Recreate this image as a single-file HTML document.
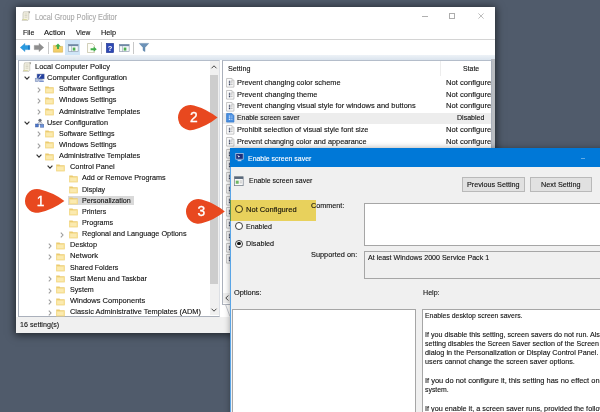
<!DOCTYPE html>
<html lang="en"><head><meta charset="utf-8"><title>Local Group Policy Editor</title>
<style>
html,body{margin:0;padding:0}
html{width:600px;height:412px;overflow:hidden}
body{width:600px;height:412px;overflow:hidden;background:#505b6b;position:relative;font-family:"Liberation Sans",sans-serif}
.abs,.ic,.tx,#win,#dlg{position:absolute}
.ic{display:block;overflow:visible}
.tx{white-space:nowrap;transform-origin:0 50%;-webkit-text-stroke:0.12px currentColor}
#win{background:#fff;box-shadow:0 1px 8px 1px rgba(0,0,0,.6);}
.pane{background:#fff;border:1px solid #aab0bb;border-top-color:#b4bdca;box-sizing:border-box}
#dlg{background:#f0f0f0;border:1px solid #5aa5e6;box-sizing:border-box;box-shadow:0 0 6px rgba(0,0,0,.35)}
.btn{background:#e1e1e1;border:0.7px solid #b9b9b9;box-sizing:border-box}
.box{border:0.7px solid #a6a6a6;box-sizing:border-box}
#clip{position:absolute;left:0;top:0;width:600px;height:412px;overflow:hidden;contain:strict}
#stage{position:absolute;left:-20px;top:-20px;width:640px;height:452px;background:#505b6b;filter:blur(0.4px)}
#org{position:absolute;left:20px;top:20px;width:0;height:0}
</style></head><body><div id="clip"><div id="stage"><div id="org">
<div id="win" style="left:16px;top:7px;width:479px;height:326px">
</div>
<svg class="ic" style="left:21px;top:11px" width="10" height="10" viewBox="0 0 10 10"><path d="M2.6 0.8h6.2l-1 1.9v5.6l-0.8 1h-6l1-1.3v-5.3z" fill="#f3f1e2" stroke="#b3b1a2" stroke-width="0.6"/><path d="M3.6 3h2.8M3.6 4.6h2.8M3.6 6.2h2.8" stroke="#c2c0ae" stroke-width="0.6"/><path d="M7.4 0.6h1.6l-0.9 1.9z" fill="#8b8b86"/><path d="M1.2 9.1l0.9-1.2h4l-0.6 1.2z" fill="#d9d8a0"/></svg>
<span class="tx" style="left:34.5px;top:11.56px;font-size:8.4px;line-height:10.08px;color:#a9a9a9;transform:scaleX(0.868)">Local Group Policy Editor</span>
<div class="abs" style="left:422px;top:15.8px;width:6px;height:0.8px;background:#b0b0b0"></div>
<div class="abs" style="left:449.4px;top:13px;width:6px;height:6px;border:0.8px solid #adadad;box-sizing:border-box"></div>
<svg class="ic" style="left:478px;top:13px" width="6" height="6" viewBox="0 0 6 6"><path d="M0.4 0.4L5.6 5.6M5.6 0.4L0.4 5.6" stroke="#adadad" stroke-width="0.8"/></svg>
<span class="tx" style="left:22.5px;top:27.60px;font-size:8.0px;line-height:9.6px;color:#111;transform:scaleX(0.877)">File</span>
<span class="tx" style="left:43.8px;top:27.60px;font-size:8.0px;line-height:9.6px;color:#111;transform:scaleX(0.958)">Action</span>
<span class="tx" style="left:75.8px;top:27.60px;font-size:8.0px;line-height:9.6px;color:#111;transform:scaleX(0.831)">View</span>
<span class="tx" style="left:101.3px;top:27.60px;font-size:8.0px;line-height:9.6px;color:#111;transform:scaleX(0.912)">Help</span>
<div class="abs" style="left:16px;top:39px;width:479px;height:1px;background:#d4d4d4"></div>
<div class="abs" style="left:16px;top:55px;width:479px;height:5px;background:linear-gradient(#edf2f7,#dbe4ee)"></div>
<svg class="ic" style="left:19.5px;top:43.2px" width="10" height="9" viewBox="0 0 10 9"><path d="M0.3 4.5L4.9 0.4v2h4.8v4.2H4.9v2z" fill="#2a9be0" stroke="#1f86cf" stroke-width="0.4"/><path d="M8 2.4h1.7v4.2H8z" fill="#1a78c2"/></svg>
<svg class="ic" style="left:33.8px;top:43.2px" width="10" height="9" viewBox="0 0 10 9"><path d="M9.7 4.5L5.1 0.4v2H0.3v4.2h4.8v2z" fill="#8e8e8e" stroke="#808080" stroke-width="0.4"/></svg>
<div class="abs" style="left:48px;top:41.7px;width:1px;height:12px;background:#c8c8c8"></div>
<svg class="ic" style="left:52.5px;top:42.7px" width="10" height="10" viewBox="0 0 10 10"><path d="M0.4 2.4h3.4l0.9 1h4.9v5.8h-9.2z" fill="#f2cf6a" stroke="#d2a840" stroke-width="0.5"/><path d="M5 0.6L7.8 3.4H6v2.6H4V3.4H2.2z" fill="#3fae49"/></svg>
<div class="abs" style="left:65px;top:40px;width:15.3px;height:15.3px;background:#cfe5f7"></div>
<svg class="ic" style="left:67.5px;top:43.900000000000006px" width="10.5" height="8" viewBox="0 0 12 9" preserveAspectRatio="none"><rect x="0.4" y="0.4" width="11.2" height="8.2" fill="#f4f7fa" stroke="#8796a8" stroke-width="0.7"/><rect x="0.4" y="0.4" width="11.2" height="2" fill="#6f88a6"/><path d="M4 2.4v6.2" stroke="#8796a8" stroke-width="0.6"/><rect x="5.4" y="4" width="3" height="3.4" fill="#4cae50"/></svg>
<svg class="ic" style="left:86.5px;top:42.7px" width="10" height="10" viewBox="0 0 10 10"><path d="M0.5 0.5h5l2 2v7h-7z" fill="#fdfdf6" stroke="#b3b08f" stroke-width="0.6"/><path d="M3.6 5.2h3V3.6L9.8 6.2L6.6 8.8V7.2h-3z" fill="#3fae49"/></svg>
<div class="abs" style="left:101.3px;top:41.7px;width:1px;height:12px;background:#c8c8c8"></div>
<svg class="ic" style="left:106.2px;top:42.5px" width="8" height="10" viewBox="0 0 8 10"><rect x="0.3" y="0.3" width="7.4" height="9.4" fill="#2d48b4" stroke="#1d3088" stroke-width="0.5"/><text x="4" y="7.6" text-anchor="middle" font-family="Liberation Sans, sans-serif" font-weight="bold" font-size="7.5" fill="#fff">?</text></svg>
<svg class="ic" style="left:119px;top:43.900000000000006px" width="10.5" height="8" viewBox="0 0 12 9" preserveAspectRatio="none"><rect x="0.4" y="0.4" width="11.2" height="8.2" fill="#f4f7fa" stroke="#8796a8" stroke-width="0.7"/><rect x="0.4" y="0.4" width="11.2" height="2" fill="#6f88a6"/><path d="M4 2.4v6.2" stroke="#8796a8" stroke-width="0.6"/><rect x="5.4" y="4" width="3" height="3.4" fill="#4cae50"/></svg>
<div class="abs" style="left:133.3px;top:41.7px;width:1px;height:12px;background:#c8c8c8"></div>
<svg class="ic" style="left:139.3px;top:43.2px" width="10" height="9" viewBox="0 0 10 9"><path d="M0.3 0.4h9.4L6 4.4v4.2L4 7.4v-3z" fill="#6c92b8" stroke="#52799f" stroke-width="0.4"/></svg>
<div class="abs pane" style="left:18px;top:60px;width:202px;height:257px;border-right-color:#dcdfe4"></div>
<div class="abs" style="left:210px;top:61px;width:9px;height:254px;background:#f0f0f0"></div>
<div class="abs" style="left:210px;top:75px;width:8.2px;height:209px;background:#cdcdcd"></div>
<svg class="ic" style="left:210.5px;top:65px" width="6" height="4" viewBox="0 0 6 4"><path d="M0.5 3.3L3 0.8L5.5 3.3" fill="none" stroke="#444" stroke-width="1"/></svg>
<svg class="ic" style="left:210.5px;top:308px" width="6" height="4" viewBox="0 0 6 4"><path d="M0.5 0.7L3 3.2L5.5 0.7" fill="none" stroke="#444" stroke-width="1"/></svg>
<svg class="ic" style="left:22.3px;top:61.900000000000006px" width="10" height="10" viewBox="0 0 10 10"><path d="M2.6 0.8h6.2l-1 1.9v5.6l-0.8 1h-6l1-1.3v-5.3z" fill="#f3f1e2" stroke="#b3b1a2" stroke-width="0.6"/><path d="M3.6 3h2.8M3.6 4.6h2.8M3.6 6.2h2.8" stroke="#c2c0ae" stroke-width="0.6"/><path d="M7.4 0.6h1.6l-0.9 1.9z" fill="#8b8b86"/><path d="M1.2 9.1l0.9-1.2h4l-0.6 1.2z" fill="#d9d8a0"/></svg>
<span class="tx" style="left:34.5px;top:61.90px;font-size:8.0px;line-height:9.6px;color:#111;transform:scaleX(0.937)">Local Computer Policy</span>
<svg class="ic" style="left:34.0px;top:73.05000000000001px" width="11" height="10" viewBox="0 0 11 10"><rect x="3" y="1" width="7.2" height="5" fill="#23409f" stroke="#8a96b4" stroke-width="0.5"/><path d="M4.3 4.8l2.2-3 1.2 0-2.2 3z" fill="#fff" opacity=".9"/><rect x="5" y="6.3" width="3.6" height="1" fill="#8da0c4"/><rect x="1.2" y="5.2" width="3.2" height="3.4" fill="#b7c4de" stroke="#6f83b3" stroke-width="0.5"/><rect x="5.2" y="7.6" width="4.6" height="1.2" fill="#5b78c0"/></svg>
<svg class="ic" style="left:24.0px;top:76.05000000000001px" width="6" height="4" viewBox="0 0 6 4"><path d="M0.6 0.7L3 3.1L5.4 0.7" fill="none" stroke="#333" stroke-width="1.2"/></svg>
<span class="tx" style="left:47.0px;top:73.05px;font-size:8.0px;line-height:9.6px;color:#111;transform:scaleX(0.942)">Computer Configuration</span>
<svg class="ic" style="left:45.05px;top:85.7px" width="9" height="7.5" viewBox="0 0 9 7.5"><path d="M0.2 0.4h3.3l0.7 0.9h4.5v5.9h-8.5z" fill="#ebcb70"/><path d="M0.2 2h8.5v5.2h-8.5z" fill="#f6df94"/><path d="M1.2 3h6.3v3h-6.3z" fill="#fbeab0"/></svg>
<svg class="ic" style="left:36.95px;top:86.8px" width="4" height="6" viewBox="0 0 4 6"><path d="M0.8 0.6L3 3L0.8 5.4" fill="none" stroke="#9c9c9c" stroke-width="1.1"/></svg>
<span class="tx" style="left:58.8px;top:84.20px;font-size:8.0px;line-height:9.6px;color:#111;transform:scaleX(0.885)">Software Settings</span>
<svg class="ic" style="left:45.05px;top:96.85000000000001px" width="9" height="7.5" viewBox="0 0 9 7.5"><path d="M0.2 0.4h3.3l0.7 0.9h4.5v5.9h-8.5z" fill="#ebcb70"/><path d="M0.2 2h8.5v5.2h-8.5z" fill="#f6df94"/><path d="M1.2 3h6.3v3h-6.3z" fill="#fbeab0"/></svg>
<svg class="ic" style="left:36.95px;top:97.95px" width="4" height="6" viewBox="0 0 4 6"><path d="M0.8 0.6L3 3L0.8 5.4" fill="none" stroke="#9c9c9c" stroke-width="1.1"/></svg>
<span class="tx" style="left:58.8px;top:95.35px;font-size:8.0px;line-height:9.6px;color:#111;transform:scaleX(0.904)">Windows Settings</span>
<svg class="ic" style="left:45.05px;top:108.0px" width="9" height="7.5" viewBox="0 0 9 7.5"><path d="M0.2 0.4h3.3l0.7 0.9h4.5v5.9h-8.5z" fill="#ebcb70"/><path d="M0.2 2h8.5v5.2h-8.5z" fill="#f6df94"/><path d="M1.2 3h6.3v3h-6.3z" fill="#fbeab0"/></svg>
<svg class="ic" style="left:36.95px;top:109.1px" width="4" height="6" viewBox="0 0 4 6"><path d="M0.8 0.6L3 3L0.8 5.4" fill="none" stroke="#9c9c9c" stroke-width="1.1"/></svg>
<span class="tx" style="left:58.8px;top:106.50px;font-size:8.0px;line-height:9.6px;color:#111;transform:scaleX(0.915)">Administrative Templates</span>
<svg class="ic" style="left:34.0px;top:117.65px" width="11" height="10" viewBox="0 0 11 10"><circle cx="6" cy="2.3" r="1.6" fill="#6b6f78"/><path d="M3.6 6.6c0-1.8 1-2.7 2.4-2.7s2.4 0.9 2.4 2.7z" fill="#d9dde6" stroke="#7b8294" stroke-width="0.5"/><rect x="1.4" y="6" width="3" height="3" fill="#4d76c8" stroke="#35569c" stroke-width="0.4"/><rect x="6.4" y="6.6" width="3.4" height="2.6" fill="#6c93dc" stroke="#35569c" stroke-width="0.4"/></svg>
<svg class="ic" style="left:24.0px;top:120.65px" width="6" height="4" viewBox="0 0 6 4"><path d="M0.6 0.7L3 3.1L5.4 0.7" fill="none" stroke="#333" stroke-width="1.2"/></svg>
<span class="tx" style="left:47.0px;top:117.65px;font-size:8.0px;line-height:9.6px;color:#111;transform:scaleX(0.914)">User Configuration</span>
<svg class="ic" style="left:45.05px;top:130.3px" width="9" height="7.5" viewBox="0 0 9 7.5"><path d="M0.2 0.4h3.3l0.7 0.9h4.5v5.9h-8.5z" fill="#ebcb70"/><path d="M0.2 2h8.5v5.2h-8.5z" fill="#f6df94"/><path d="M1.2 3h6.3v3h-6.3z" fill="#fbeab0"/></svg>
<svg class="ic" style="left:36.95px;top:131.4px" width="4" height="6" viewBox="0 0 4 6"><path d="M0.8 0.6L3 3L0.8 5.4" fill="none" stroke="#9c9c9c" stroke-width="1.1"/></svg>
<span class="tx" style="left:58.8px;top:128.80px;font-size:8.0px;line-height:9.6px;color:#111;transform:scaleX(0.885)">Software Settings</span>
<svg class="ic" style="left:45.05px;top:141.45px" width="9" height="7.5" viewBox="0 0 9 7.5"><path d="M0.2 0.4h3.3l0.7 0.9h4.5v5.9h-8.5z" fill="#ebcb70"/><path d="M0.2 2h8.5v5.2h-8.5z" fill="#f6df94"/><path d="M1.2 3h6.3v3h-6.3z" fill="#fbeab0"/></svg>
<svg class="ic" style="left:36.95px;top:142.54999999999998px" width="4" height="6" viewBox="0 0 4 6"><path d="M0.8 0.6L3 3L0.8 5.4" fill="none" stroke="#9c9c9c" stroke-width="1.1"/></svg>
<span class="tx" style="left:58.8px;top:139.95px;font-size:8.0px;line-height:9.6px;color:#111;transform:scaleX(0.904)">Windows Settings</span>
<svg class="ic" style="left:45.05px;top:152.60000000000002px" width="9" height="7.5" viewBox="0 0 9 7.5"><path d="M0.2 0.4h3.3l0.7 0.9h4.5v5.9h-8.5z" fill="#ebcb70"/><path d="M0.2 2h8.5v5.2h-8.5z" fill="#f6df94"/><path d="M1.2 3h6.3v3h-6.3z" fill="#fbeab0"/></svg>
<svg class="ic" style="left:35.75px;top:154.10000000000002px" width="6" height="4" viewBox="0 0 6 4"><path d="M0.6 0.7L3 3.1L5.4 0.7" fill="none" stroke="#333" stroke-width="1.2"/></svg>
<span class="tx" style="left:58.8px;top:151.10px;font-size:8.0px;line-height:9.6px;color:#111;transform:scaleX(0.915)">Administrative Templates</span>
<svg class="ic" style="left:56.39999999999999px;top:163.75px" width="9" height="7.5" viewBox="0 0 9 7.5"><path d="M0.2 0.4h3.3l0.7 0.9h4.5v5.9h-8.5z" fill="#ebcb70"/><path d="M0.2 2h8.5v5.2h-8.5z" fill="#f6df94"/><path d="M1.2 3h6.3v3h-6.3z" fill="#fbeab0"/></svg>
<svg class="ic" style="left:47.099999999999994px;top:165.25px" width="6" height="4" viewBox="0 0 6 4"><path d="M0.6 0.7L3 3.1L5.4 0.7" fill="none" stroke="#333" stroke-width="1.2"/></svg>
<span class="tx" style="left:70.1px;top:162.25px;font-size:8.0px;line-height:9.6px;color:#111;transform:scaleX(0.922)">Control Panel</span>
<svg class="ic" style="left:68.5px;top:174.9px" width="9" height="7.5" viewBox="0 0 9 7.5"><path d="M0.2 0.4h3.3l0.7 0.9h4.5v5.9h-8.5z" fill="#ebcb70"/><path d="M0.2 2h8.5v5.2h-8.5z" fill="#f6df94"/><path d="M1.2 3h6.3v3h-6.3z" fill="#fbeab0"/></svg>
<span class="tx" style="left:82.2px;top:173.40px;font-size:8.0px;line-height:9.6px;color:#111;transform:scaleX(0.904)">Add or Remove Programs</span>
<svg class="ic" style="left:68.5px;top:186.05px" width="9" height="7.5" viewBox="0 0 9 7.5"><path d="M0.2 0.4h3.3l0.7 0.9h4.5v5.9h-8.5z" fill="#ebcb70"/><path d="M0.2 2h8.5v5.2h-8.5z" fill="#f6df94"/><path d="M1.2 3h6.3v3h-6.3z" fill="#fbeab0"/></svg>
<span class="tx" style="left:82.2px;top:184.55px;font-size:8.0px;line-height:9.6px;color:#111;transform:scaleX(0.881)">Display</span>
<div class="abs" style="left:68px;top:195.80px;width:65.5px;height:9.6px;background:#d9d9d9"></div>
<svg class="ic" style="left:68.5px;top:197.20000000000002px" width="9" height="7.5" viewBox="0 0 9 7.5"><path d="M0.2 0.4h3.3l0.7 0.9h4.5v5.9h-8.5z" fill="#ebcb70"/><path d="M0.2 2h8.5v5.2h-8.5z" fill="#f6df94"/><path d="M1.2 3h6.3v3h-6.3z" fill="#fbeab0"/></svg>
<span class="tx" style="left:82.2px;top:195.70px;font-size:8.0px;line-height:9.6px;color:#111;transform:scaleX(0.890)">Personalization</span>
<svg class="ic" style="left:68.5px;top:208.35000000000002px" width="9" height="7.5" viewBox="0 0 9 7.5"><path d="M0.2 0.4h3.3l0.7 0.9h4.5v5.9h-8.5z" fill="#ebcb70"/><path d="M0.2 2h8.5v5.2h-8.5z" fill="#f6df94"/><path d="M1.2 3h6.3v3h-6.3z" fill="#fbeab0"/></svg>
<span class="tx" style="left:82.2px;top:206.85px;font-size:8.0px;line-height:9.6px;color:#111;transform:scaleX(0.878)">Printers</span>
<svg class="ic" style="left:68.5px;top:219.5px" width="9" height="7.5" viewBox="0 0 9 7.5"><path d="M0.2 0.4h3.3l0.7 0.9h4.5v5.9h-8.5z" fill="#ebcb70"/><path d="M0.2 2h8.5v5.2h-8.5z" fill="#f6df94"/><path d="M1.2 3h6.3v3h-6.3z" fill="#fbeab0"/></svg>
<span class="tx" style="left:82.2px;top:218.00px;font-size:8.0px;line-height:9.6px;color:#111;transform:scaleX(0.899)">Programs</span>
<svg class="ic" style="left:68.5px;top:230.65px" width="9" height="7.5" viewBox="0 0 9 7.5"><path d="M0.2 0.4h3.3l0.7 0.9h4.5v5.9h-8.5z" fill="#ebcb70"/><path d="M0.2 2h8.5v5.2h-8.5z" fill="#f6df94"/><path d="M1.2 3h6.3v3h-6.3z" fill="#fbeab0"/></svg>
<svg class="ic" style="left:60.400000000000006px;top:231.75px" width="4" height="6" viewBox="0 0 4 6"><path d="M0.8 0.6L3 3L0.8 5.4" fill="none" stroke="#9c9c9c" stroke-width="1.1"/></svg>
<span class="tx" style="left:82.2px;top:229.15px;font-size:8.0px;line-height:9.6px;color:#111;transform:scaleX(0.911)">Regional and Language Options</span>
<svg class="ic" style="left:56.39999999999999px;top:241.8px" width="9" height="7.5" viewBox="0 0 9 7.5"><path d="M0.2 0.4h3.3l0.7 0.9h4.5v5.9h-8.5z" fill="#ebcb70"/><path d="M0.2 2h8.5v5.2h-8.5z" fill="#f6df94"/><path d="M1.2 3h6.3v3h-6.3z" fill="#fbeab0"/></svg>
<svg class="ic" style="left:48.3px;top:242.9px" width="4" height="6" viewBox="0 0 4 6"><path d="M0.8 0.6L3 3L0.8 5.4" fill="none" stroke="#9c9c9c" stroke-width="1.1"/></svg>
<span class="tx" style="left:70.1px;top:240.30px;font-size:8.0px;line-height:9.6px;color:#111;transform:scaleX(0.920)">Desktop</span>
<svg class="ic" style="left:56.39999999999999px;top:252.95000000000005px" width="9" height="7.5" viewBox="0 0 9 7.5"><path d="M0.2 0.4h3.3l0.7 0.9h4.5v5.9h-8.5z" fill="#ebcb70"/><path d="M0.2 2h8.5v5.2h-8.5z" fill="#f6df94"/><path d="M1.2 3h6.3v3h-6.3z" fill="#fbeab0"/></svg>
<svg class="ic" style="left:48.3px;top:254.05000000000007px" width="4" height="6" viewBox="0 0 4 6"><path d="M0.8 0.6L3 3L0.8 5.4" fill="none" stroke="#9c9c9c" stroke-width="1.1"/></svg>
<span class="tx" style="left:70.1px;top:251.45px;font-size:8.0px;line-height:9.6px;color:#111;transform:scaleX(0.961)">Network</span>
<svg class="ic" style="left:56.39999999999999px;top:264.1px" width="9" height="7.5" viewBox="0 0 9 7.5"><path d="M0.2 0.4h3.3l0.7 0.9h4.5v5.9h-8.5z" fill="#ebcb70"/><path d="M0.2 2h8.5v5.2h-8.5z" fill="#f6df94"/><path d="M1.2 3h6.3v3h-6.3z" fill="#fbeab0"/></svg>
<span class="tx" style="left:70.1px;top:262.60px;font-size:8.0px;line-height:9.6px;color:#111;transform:scaleX(0.885)">Shared Folders</span>
<svg class="ic" style="left:56.39999999999999px;top:275.25px" width="9" height="7.5" viewBox="0 0 9 7.5"><path d="M0.2 0.4h3.3l0.7 0.9h4.5v5.9h-8.5z" fill="#ebcb70"/><path d="M0.2 2h8.5v5.2h-8.5z" fill="#f6df94"/><path d="M1.2 3h6.3v3h-6.3z" fill="#fbeab0"/></svg>
<svg class="ic" style="left:48.3px;top:276.35px" width="4" height="6" viewBox="0 0 4 6"><path d="M0.8 0.6L3 3L0.8 5.4" fill="none" stroke="#9c9c9c" stroke-width="1.1"/></svg>
<span class="tx" style="left:70.1px;top:273.75px;font-size:8.0px;line-height:9.6px;color:#111;transform:scaleX(0.908)">Start Menu and Taskbar</span>
<svg class="ic" style="left:56.39999999999999px;top:286.4px" width="9" height="7.5" viewBox="0 0 9 7.5"><path d="M0.2 0.4h3.3l0.7 0.9h4.5v5.9h-8.5z" fill="#ebcb70"/><path d="M0.2 2h8.5v5.2h-8.5z" fill="#f6df94"/><path d="M1.2 3h6.3v3h-6.3z" fill="#fbeab0"/></svg>
<svg class="ic" style="left:48.3px;top:287.5px" width="4" height="6" viewBox="0 0 4 6"><path d="M0.8 0.6L3 3L0.8 5.4" fill="none" stroke="#9c9c9c" stroke-width="1.1"/></svg>
<span class="tx" style="left:70.1px;top:284.90px;font-size:8.0px;line-height:9.6px;color:#111;transform:scaleX(0.892)">System</span>
<svg class="ic" style="left:56.39999999999999px;top:297.55px" width="9" height="7.5" viewBox="0 0 9 7.5"><path d="M0.2 0.4h3.3l0.7 0.9h4.5v5.9h-8.5z" fill="#ebcb70"/><path d="M0.2 2h8.5v5.2h-8.5z" fill="#f6df94"/><path d="M1.2 3h6.3v3h-6.3z" fill="#fbeab0"/></svg>
<svg class="ic" style="left:48.3px;top:298.65000000000003px" width="4" height="6" viewBox="0 0 4 6"><path d="M0.8 0.6L3 3L0.8 5.4" fill="none" stroke="#9c9c9c" stroke-width="1.1"/></svg>
<span class="tx" style="left:70.1px;top:296.05px;font-size:8.0px;line-height:9.6px;color:#111;transform:scaleX(0.939)">Windows Components</span>
<svg class="ic" style="left:56.39999999999999px;top:308.70000000000005px" width="9" height="7.5" viewBox="0 0 9 7.5"><path d="M0.2 0.4h3.3l0.7 0.9h4.5v5.9h-8.5z" fill="#ebcb70"/><path d="M0.2 2h8.5v5.2h-8.5z" fill="#f6df94"/><path d="M1.2 3h6.3v3h-6.3z" fill="#fbeab0"/></svg>
<svg class="ic" style="left:48.3px;top:309.80000000000007px" width="4" height="6" viewBox="0 0 4 6"><path d="M0.8 0.6L3 3L0.8 5.4" fill="none" stroke="#9c9c9c" stroke-width="1.1"/></svg>
<span class="tx" style="left:70.1px;top:307.20px;font-size:8.0px;line-height:9.6px;color:#111;transform:scaleX(0.924)">Classic Administrative Templates (ADM)</span>
<div class="abs" style="left:16px;top:316.5px;width:479px;height:16.5px;background:#f0f0f0"></div>
<span class="tx" style="left:20.3px;top:319.90px;font-size:8.0px;line-height:9.6px;color:#111;transform:scaleX(0.890)">16 setting(s)</span>
<div class="abs" style="left:491px;top:59px;width:4px;height:260px;background:#b9bcc1"></div>
<div class="abs pane" style="left:222px;top:60px;width:270px;height:245px"></div>
<div class="abs" style="left:439.5px;top:61px;width:1px;height:15px;background:#ededed"></div>
<span class="tx" style="left:227.5px;top:63.60px;font-size:8.0px;line-height:9.6px;color:#111;transform:scaleX(0.899)">Setting</span>
<span class="tx" style="left:462.6px;top:63.60px;font-size:8.0px;line-height:9.6px;color:#111;transform:scaleX(0.867)">State</span>
<span class="tx" style="left:445.8px;top:77.80px;font-size:8.0px;line-height:9.6px;color:#111;transform:scaleX(0.950)">Not configure</span>
<svg class="ic" style="left:226.2px;top:78.0px" width="8.5" height="9.6" viewBox="0 0 9 10" preserveAspectRatio="none"><path d="M0.6 0.5h5.6l2.2 2.2v6.8h-7.8z" fill="#fcfcfc" stroke="#a9a9a9" stroke-width="0.7"/><path d="M6.2 0.5v2.2h2.2" fill="none" stroke="#b5b5b5" stroke-width="0.5"/><path d="M3 3.3h1.5M3 5.1h1.5M3 6.9h1.5" stroke="#3d4660" stroke-width="1.1"/><path d="M5.2 3.3h1.8M5.2 5.1h1.8M5.2 6.9h1.8" stroke="#9a9a9a" stroke-width="0.7"/></svg>
<span class="tx" style="left:237.0px;top:77.80px;font-size:8.0px;line-height:9.6px;color:#111;transform:scaleX(0.924)">Prevent changing color scheme</span>
<span class="tx" style="left:445.8px;top:89.55px;font-size:8.0px;line-height:9.6px;color:#111;transform:scaleX(0.950)">Not configure</span>
<svg class="ic" style="left:226.2px;top:89.75px" width="8.5" height="9.6" viewBox="0 0 9 10" preserveAspectRatio="none"><path d="M0.6 0.5h5.6l2.2 2.2v6.8h-7.8z" fill="#fcfcfc" stroke="#a9a9a9" stroke-width="0.7"/><path d="M6.2 0.5v2.2h2.2" fill="none" stroke="#b5b5b5" stroke-width="0.5"/><path d="M3 3.3h1.5M3 5.1h1.5M3 6.9h1.5" stroke="#3d4660" stroke-width="1.1"/><path d="M5.2 3.3h1.8M5.2 5.1h1.8M5.2 6.9h1.8" stroke="#9a9a9a" stroke-width="0.7"/></svg>
<span class="tx" style="left:237.0px;top:89.55px;font-size:8.0px;line-height:9.6px;color:#111;transform:scaleX(0.928)">Prevent changing theme</span>
<span class="tx" style="left:445.8px;top:101.30px;font-size:8.0px;line-height:9.6px;color:#111;transform:scaleX(0.950)">Not configure</span>
<svg class="ic" style="left:226.2px;top:101.5px" width="8.5" height="9.6" viewBox="0 0 9 10" preserveAspectRatio="none"><path d="M0.6 0.5h5.6l2.2 2.2v6.8h-7.8z" fill="#fcfcfc" stroke="#a9a9a9" stroke-width="0.7"/><path d="M6.2 0.5v2.2h2.2" fill="none" stroke="#b5b5b5" stroke-width="0.5"/><path d="M3 3.3h1.5M3 5.1h1.5M3 6.9h1.5" stroke="#3d4660" stroke-width="1.1"/><path d="M5.2 3.3h1.8M5.2 5.1h1.8M5.2 6.9h1.8" stroke="#9a9a9a" stroke-width="0.7"/></svg>
<span class="tx" style="left:237.0px;top:101.30px;font-size:8.0px;line-height:9.6px;color:#111;transform:scaleX(0.930)">Prevent changing visual style for windows and buttons</span>
<div class="abs" style="left:223px;top:112.55px;width:268px;height:11px;background:#ededed"></div>
<span class="tx" style="left:456.9px;top:113.05px;font-size:8.0px;line-height:9.6px;color:#111;transform:scaleX(0.880)">Disabled</span>
<svg class="ic" style="left:226.2px;top:113.25px" width="8.5" height="9.6" viewBox="0 0 9 10" preserveAspectRatio="none"><path d="M0.6 0.5h5.6l2.2 2.2v6.8h-7.8z" fill="#4a8fe0" stroke="#2f74c8" stroke-width="0.7"/><path d="M3 3.2h1.4M3 5h1.4M3 6.8h1.4" stroke="#eaf2ff" stroke-width="1"/><path d="M5 3.2h2M5 5h2M5 6.8h2" stroke="#b5d2f6" stroke-width="0.7"/></svg>
<span class="tx" style="left:237.0px;top:113.05px;font-size:8.0px;line-height:9.6px;color:#111;transform:scaleX(0.858)">Enable screen saver</span>
<span class="tx" style="left:445.8px;top:124.80px;font-size:8.0px;line-height:9.6px;color:#111;transform:scaleX(0.950)">Not configure</span>
<svg class="ic" style="left:226.2px;top:125.00000000000001px" width="8.5" height="9.6" viewBox="0 0 9 10" preserveAspectRatio="none"><path d="M0.6 0.5h5.6l2.2 2.2v6.8h-7.8z" fill="#fcfcfc" stroke="#a9a9a9" stroke-width="0.7"/><path d="M6.2 0.5v2.2h2.2" fill="none" stroke="#b5b5b5" stroke-width="0.5"/><path d="M3 3.3h1.5M3 5.1h1.5M3 6.9h1.5" stroke="#3d4660" stroke-width="1.1"/><path d="M5.2 3.3h1.8M5.2 5.1h1.8M5.2 6.9h1.8" stroke="#9a9a9a" stroke-width="0.7"/></svg>
<span class="tx" style="left:237.0px;top:124.80px;font-size:8.0px;line-height:9.6px;color:#111;transform:scaleX(0.918)">Prohibit selection of visual style font size</span>
<span class="tx" style="left:445.8px;top:136.55px;font-size:8.0px;line-height:9.6px;color:#111;transform:scaleX(0.950)">Not configure</span>
<svg class="ic" style="left:226.2px;top:136.75px" width="8.5" height="9.6" viewBox="0 0 9 10" preserveAspectRatio="none"><path d="M0.6 0.5h5.6l2.2 2.2v6.8h-7.8z" fill="#fcfcfc" stroke="#a9a9a9" stroke-width="0.7"/><path d="M6.2 0.5v2.2h2.2" fill="none" stroke="#b5b5b5" stroke-width="0.5"/><path d="M3 3.3h1.5M3 5.1h1.5M3 6.9h1.5" stroke="#3d4660" stroke-width="1.1"/><path d="M5.2 3.3h1.8M5.2 5.1h1.8M5.2 6.9h1.8" stroke="#9a9a9a" stroke-width="0.7"/></svg>
<span class="tx" style="left:237.0px;top:136.55px;font-size:8.0px;line-height:9.6px;color:#111;transform:scaleX(0.913)">Prevent changing color and appearance</span>
<svg class="ic" style="left:226.2px;top:148.5px" width="8.5" height="9.6" viewBox="0 0 9 10" preserveAspectRatio="none"><path d="M0.6 0.5h5.6l2.2 2.2v6.8h-7.8z" fill="#fcfcfc" stroke="#a9a9a9" stroke-width="0.7"/><path d="M6.2 0.5v2.2h2.2" fill="none" stroke="#b5b5b5" stroke-width="0.5"/><path d="M3 3.3h1.5M3 5.1h1.5M3 6.9h1.5" stroke="#3d4660" stroke-width="1.1"/><path d="M5.2 3.3h1.8M5.2 5.1h1.8M5.2 6.9h1.8" stroke="#9a9a9a" stroke-width="0.7"/></svg>
<svg class="ic" style="left:226.2px;top:160.25px" width="8.5" height="9.6" viewBox="0 0 9 10" preserveAspectRatio="none"><path d="M0.6 0.5h5.6l2.2 2.2v6.8h-7.8z" fill="#fcfcfc" stroke="#a9a9a9" stroke-width="0.7"/><path d="M6.2 0.5v2.2h2.2" fill="none" stroke="#b5b5b5" stroke-width="0.5"/><path d="M3 3.3h1.5M3 5.1h1.5M3 6.9h1.5" stroke="#3d4660" stroke-width="1.1"/><path d="M5.2 3.3h1.8M5.2 5.1h1.8M5.2 6.9h1.8" stroke="#9a9a9a" stroke-width="0.7"/></svg>
<svg class="ic" style="left:226.2px;top:172.0px" width="8.5" height="9.6" viewBox="0 0 9 10" preserveAspectRatio="none"><path d="M0.6 0.5h5.6l2.2 2.2v6.8h-7.8z" fill="#fcfcfc" stroke="#a9a9a9" stroke-width="0.7"/><path d="M6.2 0.5v2.2h2.2" fill="none" stroke="#b5b5b5" stroke-width="0.5"/><path d="M3 3.3h1.5M3 5.1h1.5M3 6.9h1.5" stroke="#3d4660" stroke-width="1.1"/><path d="M5.2 3.3h1.8M5.2 5.1h1.8M5.2 6.9h1.8" stroke="#9a9a9a" stroke-width="0.7"/></svg>
<svg class="ic" style="left:226.2px;top:183.75px" width="8.5" height="9.6" viewBox="0 0 9 10" preserveAspectRatio="none"><path d="M0.6 0.5h5.6l2.2 2.2v6.8h-7.8z" fill="#fcfcfc" stroke="#a9a9a9" stroke-width="0.7"/><path d="M6.2 0.5v2.2h2.2" fill="none" stroke="#b5b5b5" stroke-width="0.5"/><path d="M3 3.3h1.5M3 5.1h1.5M3 6.9h1.5" stroke="#3d4660" stroke-width="1.1"/><path d="M5.2 3.3h1.8M5.2 5.1h1.8M5.2 6.9h1.8" stroke="#9a9a9a" stroke-width="0.7"/></svg>
<svg class="ic" style="left:226.2px;top:195.5px" width="8.5" height="9.6" viewBox="0 0 9 10" preserveAspectRatio="none"><path d="M0.6 0.5h5.6l2.2 2.2v6.8h-7.8z" fill="#fcfcfc" stroke="#a9a9a9" stroke-width="0.7"/><path d="M6.2 0.5v2.2h2.2" fill="none" stroke="#b5b5b5" stroke-width="0.5"/><path d="M3 3.3h1.5M3 5.1h1.5M3 6.9h1.5" stroke="#3d4660" stroke-width="1.1"/><path d="M5.2 3.3h1.8M5.2 5.1h1.8M5.2 6.9h1.8" stroke="#9a9a9a" stroke-width="0.7"/></svg>
<svg class="ic" style="left:226.2px;top:207.25px" width="8.5" height="9.6" viewBox="0 0 9 10" preserveAspectRatio="none"><path d="M0.6 0.5h5.6l2.2 2.2v6.8h-7.8z" fill="#fcfcfc" stroke="#a9a9a9" stroke-width="0.7"/><path d="M6.2 0.5v2.2h2.2" fill="none" stroke="#b5b5b5" stroke-width="0.5"/><path d="M3 3.3h1.5M3 5.1h1.5M3 6.9h1.5" stroke="#3d4660" stroke-width="1.1"/><path d="M5.2 3.3h1.8M5.2 5.1h1.8M5.2 6.9h1.8" stroke="#9a9a9a" stroke-width="0.7"/></svg>
<svg class="ic" style="left:226.2px;top:219.0px" width="8.5" height="9.6" viewBox="0 0 9 10" preserveAspectRatio="none"><path d="M0.6 0.5h5.6l2.2 2.2v6.8h-7.8z" fill="#fcfcfc" stroke="#a9a9a9" stroke-width="0.7"/><path d="M6.2 0.5v2.2h2.2" fill="none" stroke="#b5b5b5" stroke-width="0.5"/><path d="M3 3.3h1.5M3 5.1h1.5M3 6.9h1.5" stroke="#3d4660" stroke-width="1.1"/><path d="M5.2 3.3h1.8M5.2 5.1h1.8M5.2 6.9h1.8" stroke="#9a9a9a" stroke-width="0.7"/></svg>
<svg class="ic" style="left:226.2px;top:230.75px" width="8.5" height="9.6" viewBox="0 0 9 10" preserveAspectRatio="none"><path d="M0.6 0.5h5.6l2.2 2.2v6.8h-7.8z" fill="#fcfcfc" stroke="#a9a9a9" stroke-width="0.7"/><path d="M6.2 0.5v2.2h2.2" fill="none" stroke="#b5b5b5" stroke-width="0.5"/><path d="M3 3.3h1.5M3 5.1h1.5M3 6.9h1.5" stroke="#3d4660" stroke-width="1.1"/><path d="M5.2 3.3h1.8M5.2 5.1h1.8M5.2 6.9h1.8" stroke="#9a9a9a" stroke-width="0.7"/></svg>
<svg class="ic" style="left:226.2px;top:242.5px" width="8.5" height="9.6" viewBox="0 0 9 10" preserveAspectRatio="none"><path d="M0.6 0.5h5.6l2.2 2.2v6.8h-7.8z" fill="#fcfcfc" stroke="#a9a9a9" stroke-width="0.7"/><path d="M6.2 0.5v2.2h2.2" fill="none" stroke="#b5b5b5" stroke-width="0.5"/><path d="M3 3.3h1.5M3 5.1h1.5M3 6.9h1.5" stroke="#3d4660" stroke-width="1.1"/><path d="M5.2 3.3h1.8M5.2 5.1h1.8M5.2 6.9h1.8" stroke="#9a9a9a" stroke-width="0.7"/></svg>
<svg class="ic" style="left:226.2px;top:254.25px" width="8.5" height="9.6" viewBox="0 0 9 10" preserveAspectRatio="none"><path d="M0.6 0.5h5.6l2.2 2.2v6.8h-7.8z" fill="#fcfcfc" stroke="#a9a9a9" stroke-width="0.7"/><path d="M6.2 0.5v2.2h2.2" fill="none" stroke="#b5b5b5" stroke-width="0.5"/><path d="M3 3.3h1.5M3 5.1h1.5M3 6.9h1.5" stroke="#3d4660" stroke-width="1.1"/><path d="M5.2 3.3h1.8M5.2 5.1h1.8M5.2 6.9h1.8" stroke="#9a9a9a" stroke-width="0.7"/></svg>
<div class="abs" style="left:223px;top:293px;width:8px;height:10px;background:#f0f0f0"></div>
<svg class="ic" style="left:225px;top:295px" width="4" height="6" viewBox="0 0 4 6"><path d="M3.3 0.5L0.8 3L3.3 5.5" fill="none" stroke="#444" stroke-width="1"/></svg>
<svg class="ic" style="left:222px;top:304px" width="10" height="13" viewBox="0 0 10 13"><path d="M0.5 0.5h3l4.5 12" fill="none" stroke="#b5b9c0" stroke-width="0.8"/></svg>
<div id="dlg" style="left:229.5px;top:147.5px;width:380px;height:270px"></div>
<div class="abs" style="left:230px;top:148px;width:371px;height:18.5px;background:#0078d7"></div>
<svg class="ic" style="left:234.5px;top:153px" width="9" height="9" viewBox="0 0 9 9"><rect x="0.8" y="0.6" width="7.4" height="5.6" fill="#1c2e7a" stroke="#c9d3e6" stroke-width="0.7"/><rect x="2.6" y="7" width="3.8" height="1.2" fill="#c9d3e6"/><path d="M2.4 2l2.6 1.4-1.4 1.2z" fill="#fff"/></svg>
<span class="tx" style="left:248.0px;top:153.50px;font-size:8.0px;line-height:9.6px;color:#fff;transform:scaleX(0.868)">Enable screen saver</span>
<div class="abs" style="left:580.5px;top:157.6px;width:4px;height:0.8px;background:rgba(255,255,255,.38)"></div>
<svg class="ic" style="left:234px;top:175.6px" width="9.6" height="10.2" viewBox="0 0 11 11" preserveAspectRatio="none"><rect x="0.5" y="0.8" width="10" height="9.6" fill="#fafafa" stroke="#6f7a86" stroke-width="0.8"/><rect x="0.5" y="0.8" width="10" height="2.4" fill="#59687a"/><rect x="2" y="5" width="3.4" height="3.4" fill="#6fb563"/><path d="M6.5 5.4h2.6M6.5 7.4h2.6" stroke="#9a9a9a" stroke-width="0.7"/></svg>
<span class="tx" style="left:248.8px;top:175.70px;font-size:8.0px;line-height:9.6px;color:#111;transform:scaleX(0.868)">Enable screen saver</span>
<div class="abs btn" style="left:462.2px;top:176.6px;width:62.4px;height:15.8px"></div>
<div class="abs btn" style="left:529.5px;top:176.6px;width:62.4px;height:15.8px"></div>
<span class="tx" style="left:466.7px;top:179.60px;font-size:8.0px;line-height:9.6px;color:#111;transform:scaleX(0.903)">Previous Setting</span>
<span class="tx" style="left:540.7px;top:179.60px;font-size:8.0px;line-height:9.6px;color:#111;transform:scaleX(0.906)">Next Setting</span>
<span class="tx" style="left:310.8px;top:200.60px;font-size:8.0px;line-height:9.6px;color:#111;transform:scaleX(0.905)">Comment:</span>
<div class="abs box" style="left:364px;top:202.5px;width:240px;height:43.8px;background:#fff"></div>
<div class="abs" style="left:235.1px;top:205.4px;width:8px;height:8px;border-radius:50%;border:0.75px solid #3c3c3c;box-sizing:border-box;background:#fff"></div>
<div class="abs" style="left:235.1px;top:222.4px;width:8px;height:8px;border-radius:50%;border:0.75px solid #3c3c3c;box-sizing:border-box;background:#fff"></div>
<div class="abs" style="left:235.1px;top:239.5px;width:8px;height:8px;border-radius:50%;border:0.75px solid #3c3c3c;box-sizing:border-box;background:#fff"></div><div class="abs" style="left:237.2px;top:241.6px;width:3.8px;height:3.8px;border-radius:50%;background:#111"></div>
<span class="tx" style="left:246.2px;top:204.50px;font-size:8.0px;line-height:9.6px;color:#111;transform:scaleX(0.942)">Not Configured</span>
<span class="tx" style="left:246.2px;top:221.90px;font-size:8.0px;line-height:9.6px;color:#111;transform:scaleX(0.882)">Enabled</span>
<span class="tx" style="left:246.2px;top:238.50px;font-size:8.0px;line-height:9.6px;color:#111;transform:scaleX(0.899)">Disabled</span>
<div class="abs" style="left:230px;top:200px;width:85.6px;height:21.2px;background:#f7de62;mix-blend-mode:multiply"></div>
<span class="tx" style="left:311.2px;top:249.80px;font-size:8.0px;line-height:9.6px;color:#111;transform:scaleX(0.919)">Supported on:</span>
<div class="abs box" style="left:364px;top:250.8px;width:240px;height:28.6px;background:#f0f0f0"></div>
<span class="tx" style="left:368.0px;top:252.60px;font-size:8.0px;line-height:9.6px;color:#111;transform:scaleX(0.884)">At least Windows 2000 Service Pack 1</span>
<span class="tx" style="left:233.5px;top:287.80px;font-size:8.0px;line-height:9.6px;color:#111;transform:scaleX(0.923)">Options:</span>
<span class="tx" style="left:422.8px;top:287.70px;font-size:8.0px;line-height:9.6px;color:#111;transform:scaleX(0.888)">Help:</span>
<div class="abs box" style="left:232.3px;top:309.3px;width:184px;height:110px;background:#fff"></div>
<div class="abs box" style="left:421.5px;top:309.3px;width:184px;height:110px;background:#fff"></div>
<span class="tx" style="left:424.9px;top:310.80px;font-size:8.0px;line-height:9.6px;color:#111;transform:scaleX(0.860)">Enables desktop screen savers.</span>
<span class="tx" style="left:424.9px;top:329.50px;font-size:8.0px;line-height:9.6px;color:#111;transform:scaleX(0.896)">If you disable this setting, screen savers do not run. Also, this</span>
<span class="tx" style="left:424.9px;top:338.80px;font-size:8.0px;line-height:9.6px;color:#111;transform:scaleX(0.885)">setting disables the Screen Saver section of the Screen Saver</span>
<span class="tx" style="left:424.9px;top:348.10px;font-size:8.0px;line-height:9.6px;color:#111;transform:scaleX(0.909)">dialog in the Personalization or Display Control Panel. As a result,</span>
<span class="tx" style="left:424.9px;top:357.40px;font-size:8.0px;line-height:9.6px;color:#111;transform:scaleX(0.903)">users cannot change the screen saver options.</span>
<span class="tx" style="left:424.9px;top:376.00px;font-size:8.0px;line-height:9.6px;color:#111;transform:scaleX(0.933)">If you do not configure it, this setting has no effect on the</span>
<span class="tx" style="left:424.9px;top:385.30px;font-size:8.0px;line-height:9.6px;color:#111;transform:scaleX(0.860)">system.</span>
<span class="tx" style="left:424.9px;top:404.00px;font-size:8.0px;line-height:9.6px;color:#111;transform:scaleX(0.908)">If you enable it, a screen saver runs, provided the following two</span>
<svg class="ic mk" style="left:22.5px;top:187.1px" width="43.4" height="27.8" viewBox="0 0 43.4 27.8"><path d="M41.40 13.90Q29.93 5.40 16.58 2.31A11.9 11.9 0 1 0 16.58 25.49Q29.93 22.40 41.40 13.90Z" fill="#e8481f"/><text x="17.7" y="18.8" text-anchor="middle" style="font-family:'Liberation Sans',sans-serif;font-size:13.8px" fill="#fff" stroke="#fff" stroke-width="0.35">1</text></svg>
<svg class="ic mk" style="left:176.0px;top:103.4px" width="43.6" height="29.2" viewBox="0 0 43.6 29.2"><path d="M41.60 14.60Q30.76 5.94 17.91 2.44A12.6 12.6 0 1 0 17.91 26.76Q30.76 23.26 41.60 14.60Z" fill="#e8481f"/><text x="17.8" y="19.5" text-anchor="middle" style="font-family:'Liberation Sans',sans-serif;font-size:13.8px" fill="#fff" stroke="#fff" stroke-width="0.35">2</text></svg>
<svg class="ic mk" style="left:184.1px;top:196.6px" width="42.8" height="28.8" viewBox="0 0 42.8 28.8"><path d="M40.80 14.40Q30.23 5.90 17.69 2.45A12.4 12.4 0 1 0 17.69 26.35Q30.23 22.90 40.80 14.40Z" fill="#e8481f"/><text x="17.3" y="19.3" text-anchor="middle" style="font-family:'Liberation Sans',sans-serif;font-size:13.8px" fill="#fff" stroke="#fff" stroke-width="0.35">3</text></svg>
</div></div></div></body></html>
